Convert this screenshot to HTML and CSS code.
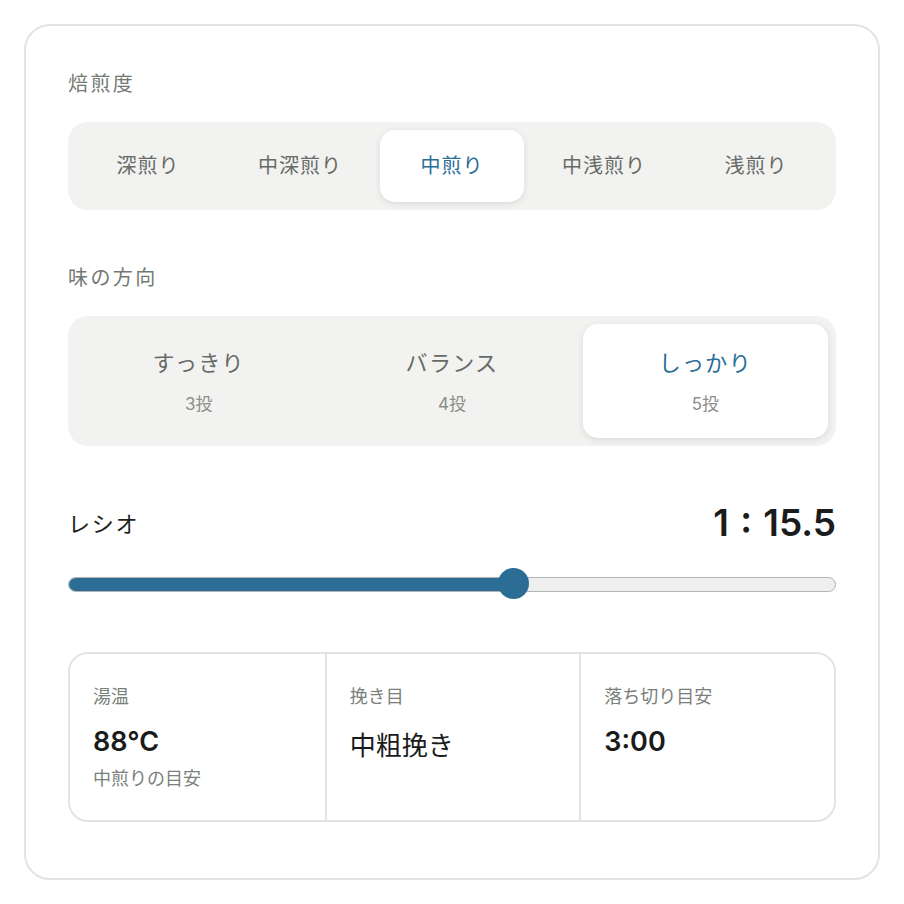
FILE: index.html
```html
<!DOCTYPE html>
<html lang="ja">
<head>
  <meta charset="UTF-8" />
  <meta name="viewport" content="width=device-width, initial-scale=1" />
  <title>抽出設定</title>
  <link rel="stylesheet" href="styles.css">
</head>
<body>

  <div class="card">
    <div class="section-label">焙煎度</div>
    <div class="seg seg-roast">
      <div class="seg-item">深煎り</div>
      <div class="seg-item">中深煎り</div>
      <div class="seg-item active">中煎り</div>
      <div class="seg-item">中浅煎り</div>
      <div class="seg-item">浅煎り</div>
    </div>

    <div class="section-label taste-label">味の方向</div>
    <div class="seg seg-taste">
      <div class="seg-item">
        <span class="taste-name">すっきり</span>
        <span class="taste-sub">3投</span>
      </div>
      <div class="seg-item">
        <span class="taste-name">バランス</span>
        <span class="taste-sub">4投</span>
      </div>
      <div class="seg-item active">
        <span class="taste-name">しっかり</span>
        <span class="taste-sub">5投</span>
      </div>
    </div>

    <div class="ratio-row">
      <span class="ratio-label">レシオ</span>
      <span class="ratio-value">1 : 15.5</span>
    </div>
    <div class="slider">
      <div class="slider-track">
        <div class="slider-fill" style="width: 58%"></div>
      </div>
      <div class="slider-thumb" style="left: 58%"></div>
    </div>

    <div class="info-grid">
      <div class="info-cell">
        <div class="info-label">湯温</div>
        <div class="info-value num">88°C</div>
        <div class="info-sub">中煎りの目安</div>
      </div>
      <div class="info-cell">
        <div class="info-label">挽き目</div>
        <div class="info-value grind">中粗挽き</div>
      </div>
      <div class="info-cell">
        <div class="info-label">落ち切り目安</div>
        <div class="info-value num">3:00</div>
      </div>
    </div>
  </div>

</body>
</html>
```

FILE: styles.css
```css
body {
  margin: 0;
  padding: 24px;
  background-color: #ffffff;
  font-family: 'Inter', 'Noto Sans CJK JP', sans-serif;
  color: #1e1f1e;
}

.card {
  box-sizing: border-box;
  width: 856px;
  height: 856px;
  border: 2px solid #e3e3df;
  border-radius: 26px;
  padding: 42px 42px 56px;
  background: #ffffff;
}

.section-label {
  font-size: 20px;
  line-height: 32px;
  letter-spacing: 0.12em;
  color: #737873;
  margin-bottom: 22px;
}

.taste-label {
  margin-top: 52px;
}

.seg {
  display: grid;
  gap: 8px;
  padding: 8px;
  background-color: #f2f2f0;
  border-radius: 20px;
}

.seg-roast {
  grid-template-columns: repeat(5, 1fr);
}

.seg-taste {
  grid-template-columns: repeat(3, 1fr);
}

.seg-item {
  box-sizing: border-box;
  display: flex;
  flex-direction: column;
  align-items: center;
  justify-content: center;
  height: 72px;
  padding-bottom: 4px;
  border-radius: 15px;
  font-size: 20px;
  letter-spacing: 0.05em;
  color: #666b67;
}

.seg-taste .seg-item {
  height: 114px;
  padding-bottom: 0;
}

.seg-item.active {
  background-color: #ffffff;
  color: #2a6e97;
  box-shadow: 0 2px 7px rgba(0, 0, 0, 0.1);
}

.taste-name {
  font-size: 22px;
  line-height: 32px;
  letter-spacing: 0.06em;
}

.taste-sub {
  margin-top: 14px;
  font-size: 17px;
  line-height: 22px;
  letter-spacing: 0;
  color: #8b8f8b;
}

.ratio-row {
  display: flex;
  justify-content: space-between;
  align-items: center;
  margin-top: 54px;
  height: 44px;
}

.ratio-label {
  font-size: 22px;
  letter-spacing: 0.08em;
  color: #1e1f1e;
}

.ratio-value {
  font-size: 37px;
  font-weight: 600;
  word-spacing: 2px;
  color: #1a1b1a;
}

.slider {
  position: relative;
  margin-top: 24px;
  height: 32px;
  display: flex;
  align-items: center;
}

.slider-track {
  box-sizing: border-box;
  width: 100%;
  height: 15px;
  border: 1.5px solid #b4b4b4;
  border-radius: 8px;
  background-color: #efefef;
  overflow: hidden;
}

.slider-fill {
  height: 100%;
  background-color: #2b6d94;
}

.slider-thumb {
  position: absolute;
  top: 0;
  width: 31px;
  height: 31px;
  margin-left: -15px;
  border-radius: 50%;
  background-color: #2b6d94;
}

.info-grid {
  display: grid;
  grid-template-columns: repeat(3, 1fr);
  margin-top: 52px;
  height: 170px;
  box-sizing: border-box;
  border: 2px solid #e3e3df;
  border-radius: 20px;
}

.info-cell {
  padding: 30px 23px 28px;
}

.info-cell + .info-cell {
  border-left: 2px solid #e3e3df;
}

.info-label {
  font-size: 18px;
  line-height: 26px;
  color: #7b7f7b;
}

.info-value {
  margin-top: 14px;
  font-size: 26px;
  line-height: 36px;
  color: #1a1b1a;
}

.info-value.grind {
  margin-top: 18px;
}

.info-value.num {
  font-size: 27px;
  font-weight: 600;
}

.info-sub {
  margin-top: 6px;
  font-size: 18px;
  line-height: 26px;
  color: #7b7f7b;
}
```
